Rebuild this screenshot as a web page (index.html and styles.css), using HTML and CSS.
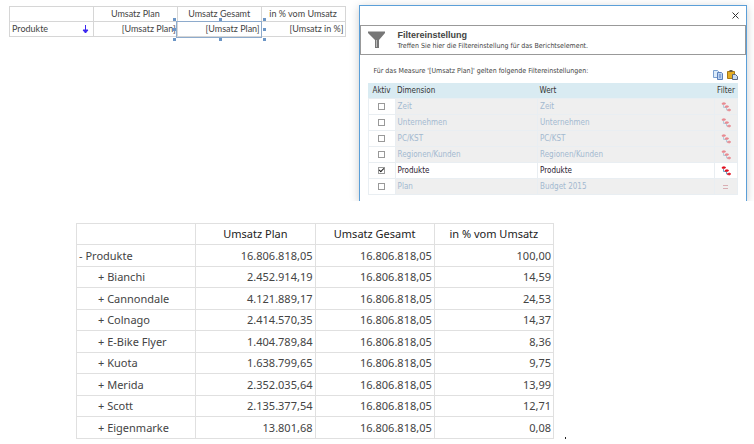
FILE: index.html
```html
<!DOCTYPE html>
<html lang="de">
<head>
  <meta charset="UTF-8" />
  <meta name="viewport" content="width=device-width, initial-scale=1.0"/>
  <title>Filtereinstellung</title>
  <link rel="stylesheet" href="styles.css">
</head>
<body>
  <svg class="defs" width="0" height="0" aria-hidden="true">
    <symbol id="tree" viewBox="0 0 10 10">
      <path d="M2.5 3v2.5H5M5.5 5.5V8H8" fill="none" stroke="#6aa5c8" stroke-width="1"/>
      <path d="M1 1.2l2-.7 2 1-2 1.2-2-.5zM4 4.2l2-.7 2 1-2 1.2-2-.5zM6.5 7.6l2-.7 1.5 1-1.5 1.2-2-.5z" fill="#e01020" stroke="#e01020" stroke-width=".5"/>
    </symbol>
  </svg>

  <div class="top">
    <div class="design">
      <table class="designer">
        <tr><th></th><th>Umsatz Plan</th><th>Umsatz Gesamt</th><th>in % vom Umsatz</th></tr>
        <tr>
          <td class="name"><div class="sort">Produkte
            <svg width="7" height="9" viewBox="0 0 7 9"><path d="M3.5 0v8M1 5l2.5 3L6 5z" fill="#3c28f0" stroke="#3c28f0"/></svg></div>
          </td>
          <td>[Umsatz Plan]</td>
          <td class="selected">[Umsatz Plan]
            <i class="handle left top-edge"></i><i class="handle center top-edge"></i><i class="handle right top-edge"></i>
            <i class="handle left middle"></i><i class="handle right middle"></i>
            <i class="handle left bottom-edge"></i><i class="handle center bottom-edge"></i><i class="handle right bottom-edge"></i>
          </td>
          <td>[Umsatz in %]</td>
        </tr>
      </table>
    </div>

    <div class="dialog" role="dialog" aria-labelledby="dialogTitle">
      <div class="titlebar">
        <button class="close" aria-label="Schließen"><svg width="7" height="7" viewBox="0 0 7 7"><path d="M.5 .5l6 6M6.5 .5l-6 6" stroke="#333" fill="none"/></svg></button>
      </div>
      <div class="intro">
        <svg width="18" height="18" viewBox="0 0 18 18"><path d="M0 0h17v2l-6 7v8H7V9L0 2z" fill="#777"/><path d="M0 0h17v1H0zM8 9h1v7H8z" fill="#bbb"/></svg>
        <div>
          <h1 id="dialogTitle">Filtereinstellung</h1>
          <p>Treffen Sie hier die Filtereinstellung für das Berichtselement.</p>
        </div>
      </div>
      <div class="content">
        <div class="measure">
          <p>Für das Measure '[Umsatz Plan]' gelten folgende Filtereinstellungen:</p>
          <div class="tools">
            <button aria-label="Kopieren"><svg width="10" height="10" viewBox="0 0 10 10"><path d="M.5 .5h4l1 1v6h-5z" fill="#dcebfa" stroke="#7ba0d0"/><path d="M4.5 2.5h4l1 1v6h-5z" fill="#b9d2f2" stroke="#5b80bd"/><path d="M6 5h2M6 7h2" stroke="#5b80bd"/></svg></button>
            <button aria-label="Einfügen"><svg width="11" height="10" viewBox="0 0 11 10"><path d="M.5 1.5h7v7h-7z" fill="#e3ac24" stroke="#a97813"/><path d="M2.5 0h3v2h-3z" fill="#665b49"/><path d="M5.5 4.5h3l2 2v3h-5z" fill="#c9daf0" stroke="#59677e"/></svg></button>
          </div>
        </div>
        <table class="filters">
          <tr><th class="check">Aktiv</th><th>Dimension</th><th class="value">Wert</th><th class="icon">Filter</th></tr>
          <tr>
            <td class="check"><input type="checkbox" aria-labelledby="zeit"></td>
            <td id="zeit">Zeit</td><td>Zeit</td>
            <td class="icon"><svg width="10" height="10"><use href="#tree"/></svg></td>
          </tr>
          <tr>
            <td class="check"><input type="checkbox" aria-labelledby="unternehmen"></td>
            <td id="unternehmen">Unternehmen</td><td>Unternehmen</td>
            <td class="icon"><svg width="10" height="10"><use href="#tree"/></svg></td>
          </tr>
          <tr>
            <td class="check"><input type="checkbox" aria-labelledby="kst"></td>
            <td id="kst">PC/KST</td><td>PC/KST</td>
            <td class="icon"><svg width="10" height="10"><use href="#tree"/></svg></td>
          </tr>
          <tr>
            <td class="check"><input type="checkbox" aria-labelledby="regionen"></td>
            <td id="regionen">Regionen/Kunden</td><td>Regionen/Kunden</td>
            <td class="icon"><svg width="10" height="10"><use href="#tree"/></svg></td>
          </tr>
          <tr class="active">
            <td class="check"><input type="checkbox" aria-labelledby="produkte" checked></td>
            <td id="produkte">Produkte</td><td>Produkte</td>
            <td class="icon"><svg width="10" height="10"><use href="#tree"/></svg></td>
          </tr>
          <tr>
            <td class="check"><input type="checkbox" aria-labelledby="plan"></td>
            <td id="plan">Plan</td><td>Budget 2015</td>
            <td class="icon"><svg width="10" height="10" viewBox="0 0 10 10"><path d="M2 3.5h5M2 6.5h5" stroke="#c0606c"/></svg></td>
          </tr>
        </table>
      </div>
    </div>
  </div>

  <div class="bottom">
    <table class="report">
      <tr><th></th><th>Umsatz Plan</th><th>Umsatz Gesamt</th><th>in % vom Umsatz</th></tr>
      <tr><td class="total">- Produkte</td><td>16.806.818,05</td><td>16.806.818,05</td><td>100,00</td></tr>
      <tr><td>+ Bianchi</td><td>2.452.914,19</td><td>16.806.818,05</td><td>14,59</td></tr>
      <tr><td>+ Cannondale</td><td>4.121.889,17</td><td>16.806.818,05</td><td>24,53</td></tr>
      <tr><td>+ Colnago</td><td>2.414.570,35</td><td>16.806.818,05</td><td>14,37</td></tr>
      <tr><td>+ E-Bike Flyer</td><td>1.404.789,84</td><td>16.806.818,05</td><td>8,36</td></tr>
      <tr><td>+ Kuota</td><td>1.638.799,65</td><td>16.806.818,05</td><td>9,75</td></tr>
      <tr><td>+ Merida</td><td>2.352.035,64</td><td>16.806.818,05</td><td>13,99</td></tr>
      <tr><td>+ Scott</td><td>2.135.377,54</td><td>16.806.818,05</td><td>12,71</td></tr>
      <tr><td>+ Eigenmarke</td><td>13.801,68</td><td>16.806.818,05</td><td>0,08</td></tr>
    </table>
    <span class="caret"></span>
  </div>
</body>
</html>
```
FILE: styles.css
```css
* {
  box-sizing: border-box;
  margin: 0;
  padding: 0;
}

body {
  font-family: "Noto Sans", "Open Sans", sans-serif;
  background: #fff;
  color: #444;
}

.defs {
  position: absolute;
}

table {
  width: 100%;
  border-collapse: collapse;
  table-layout: fixed;
}

th {
  font-weight: 400;
}

button {
  display: flex;
  border: none;
  background: none;
}

svg {
  display: block;
}

/* upper half: report designer and filter dialog */
.top {
  display: grid;
  grid-template-columns: 48fr 52fr;
  padding-right: 7px;
  overflow: hidden;
}

.design {
  padding: 6px 13px 0 9px;
}

.designer {
  font-family: Lato, sans-serif;
  font-size: 9px;
  line-height: 14px;
}

.designer th,
.designer td {
  height: 15px;
  border: 1px solid #d6d6d6;
  padding: 0 1px;
}

.designer td {
  text-align: right;
}

.sort {
  display: flex;
  align-items: center;
  justify-content: space-between;
  padding-right: 3px;
}

.designer .selected {
  position: relative;
  outline: 1px solid #8eabcc;
}

.handle {
  position: absolute;
  width: 3px;
  height: 3px;
  background: #6c96c6;
}

.left { left: -5px; }
.center { left: 50%; }
.right { right: -5px; }
.top-edge { top: -4px; }
.middle { top: 6px; }
.bottom-edge { bottom: -5px; }

.dialog {
  margin-top: 5px;
  border: 1px solid #5b9fd8;
  border-bottom: none;
  box-shadow: 0 2px 9px #ccc;
  background: #fff;
}

.titlebar {
  display: flex;
  justify-content: flex-end;
  height: 19px;
  padding: 6px 7px;
}

.intro {
  display: flex;
  gap: 12px;
  height: 30px;
  padding: 5px 7px 0;
  border: 1px solid #999;
}

.intro h1 {
  font: 700 9px/9px "Liberation Sans", Arial, sans-serif;
}

.intro p {
  font-family: "DejaVu Sans Condensed", "DejaVu Sans", sans-serif;
  font-size: 7px;
  line-height: 13px;
}

.content {
  padding: 9px 8px 6px;
}

.measure {
  display: flex;
  justify-content: space-between;
  height: 19px;
  padding-left: 6px;
  font-family: "DejaVu Sans Condensed", "DejaVu Sans", sans-serif;
  font-size: 7px;
  line-height: 14px;
}

.tools {
  display: flex;
  align-items: flex-end;
  gap: 4px;
  padding-bottom: 3px;
}

.filters {
  font-family: "DejaVu Sans Condensed", "DejaVu Sans", sans-serif;
  font-size: 8px;
  line-height: 15px;
  color: #a3b9d0;
}

.filters th {
  height: 15px;
  background: #d9ebf2;
  color: #333;
  text-align: left;
}

.filters td {
  height: 16px;
  border: 1px solid #e9eef2;
  background: #efefef;
}

.filters th,
.filters td {
  padding: 0 2px;
}

.filters .check {
  width: 27px;
  text-align: center;
}

.filters td.check {
  background: #fff;
}

.filters .value {
  width: 177px;
}

.filters .icon {
  width: 23px;
  text-align: center;
}

.filters th.check,
.filters th.icon {
  padding: 0;
}

.icon svg {
  margin: 0 auto;
  opacity: 0.45;
}

.filters .active td {
  background: #fff;
  color: #2b2030;
}

.active .icon svg {
  opacity: 1;
}

input {
  appearance: none;
  display: block;
  width: 7px;
  height: 7px;
  margin: 0 auto;
  border: 1px solid #999;
  background: #fff;
}

input:checked::before {
  content: "";
  display: block;
  box-sizing: border-box;
  width: 5px;
  height: 3px;
  border: solid #222;
  border-width: 0 0 1px 1px;
  transform: rotate(-45deg);
}

/* lower half: finished report */
.bottom {
  display: flex;
  align-items: flex-end;
  gap: 11px;
  padding: 22px 0 0 76px;
}

.report {
  width: 478px;
  font-size: 11px;
  line-height: 20px;
}

.report th,
.report td {
  height: 21px;
  border: 1px solid #e0e0e0;
  padding: 0 2px;
  text-align: right;
}

.report tr:nth-child(even) td {
  height: 22px;
}

.report th {
  color: #222;
  text-align: center;
}

.report td:first-child {
  padding-left: 21px;
  text-align: left;
}

.report td.total:first-child,
.designer td.name {
  padding-left: 2px;
  text-align: left;
}

.caret {
  width: 1px;
  height: 2px;
  background: #222;
}
```
